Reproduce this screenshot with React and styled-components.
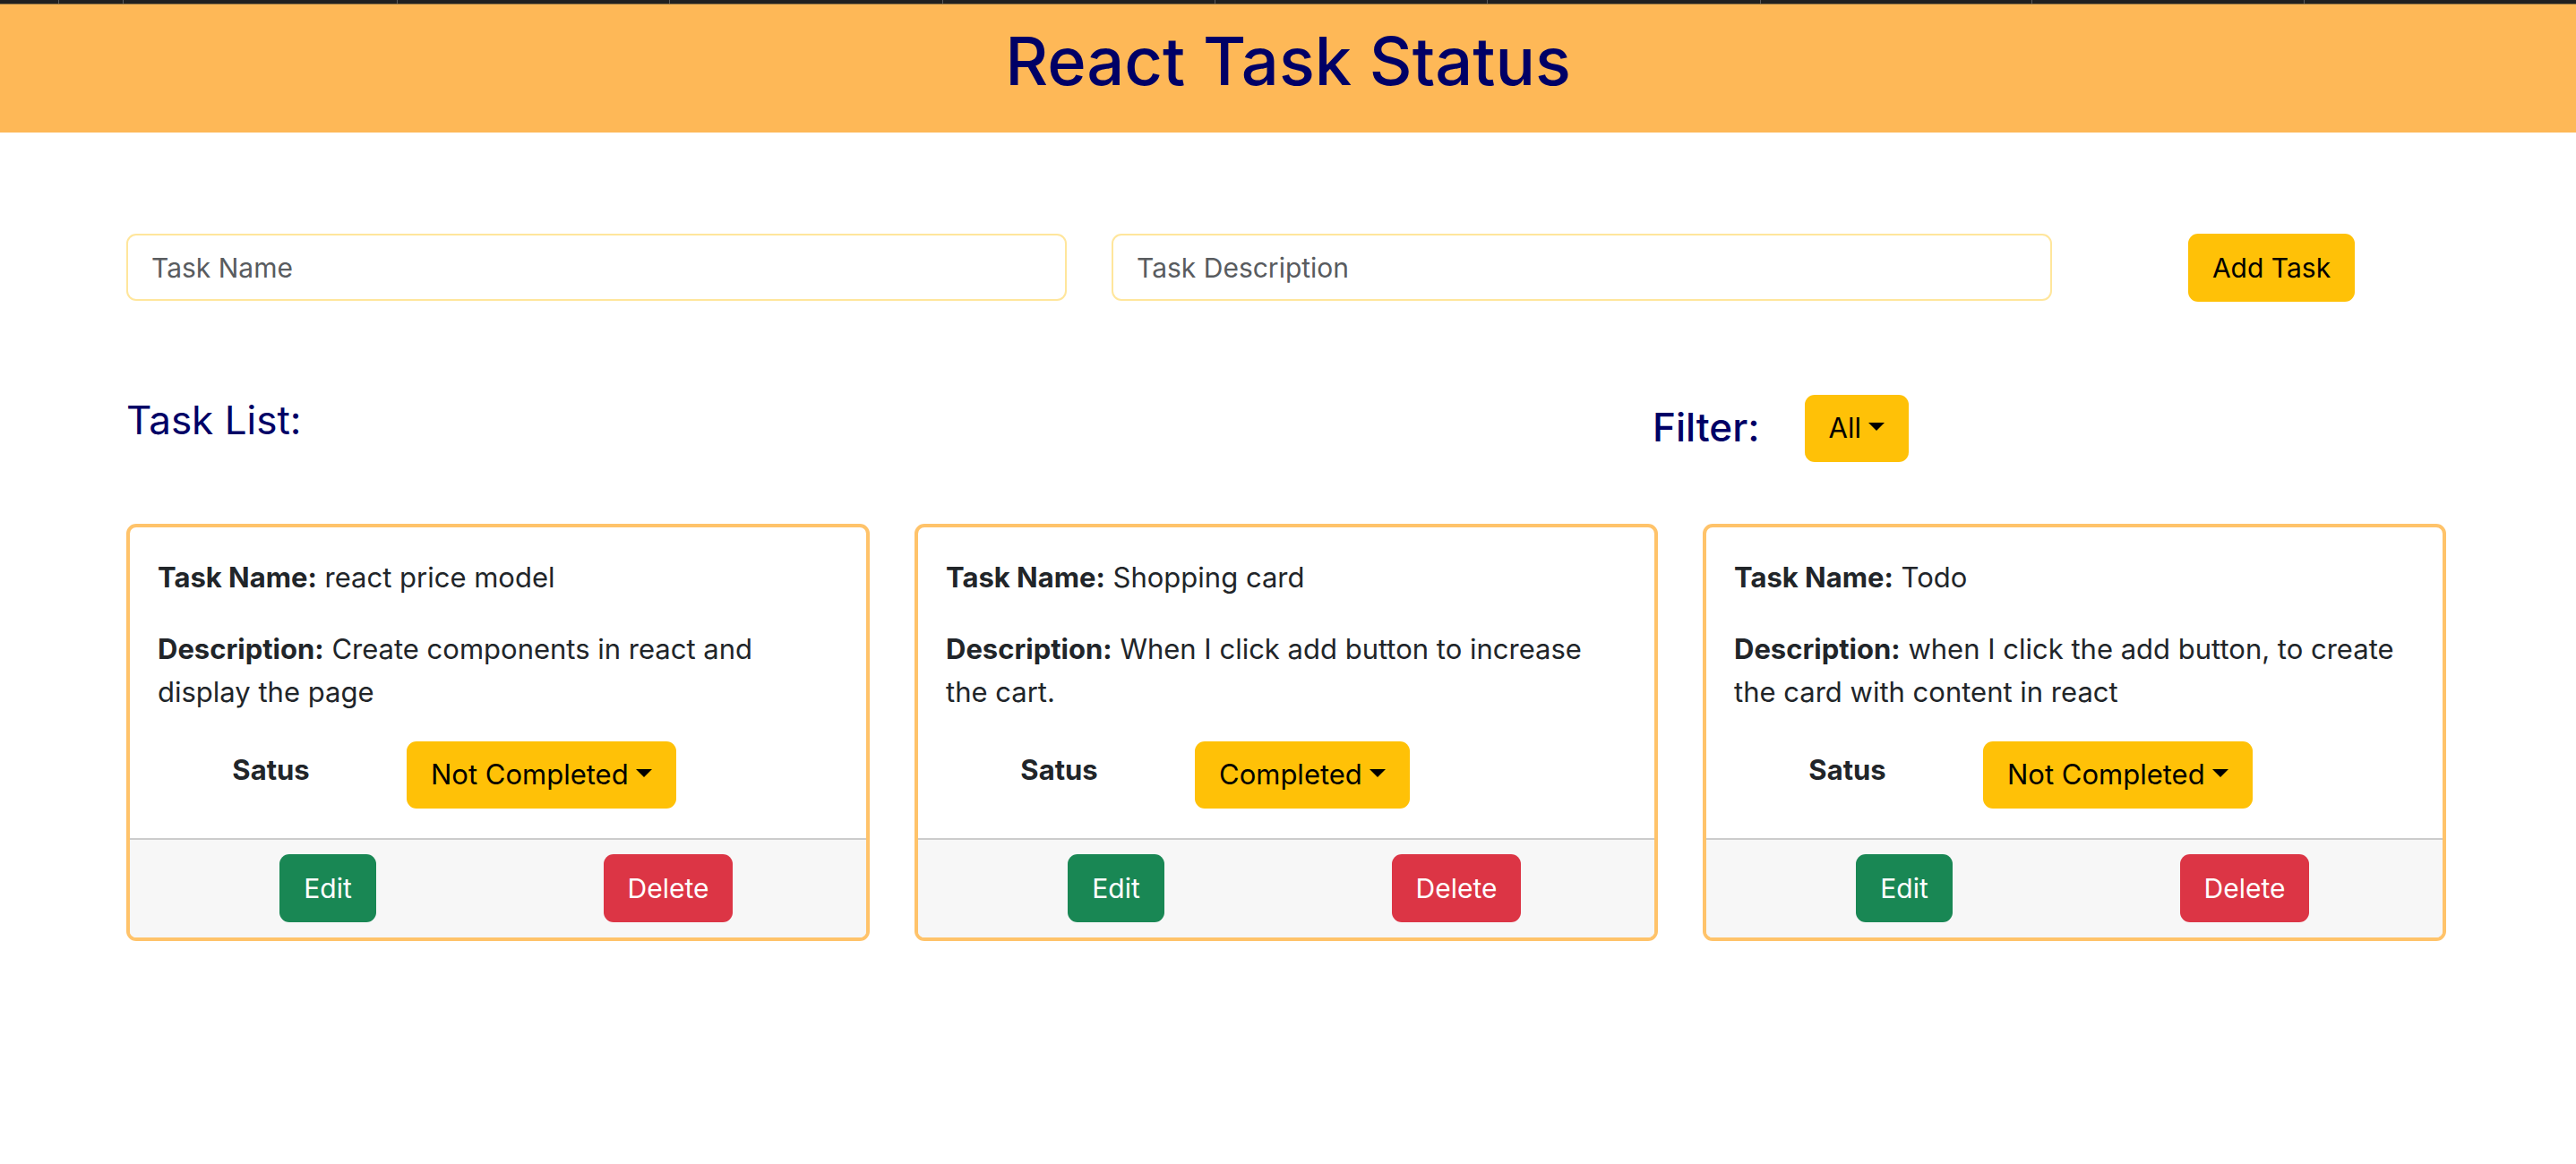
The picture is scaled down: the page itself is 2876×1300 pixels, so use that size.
import styled, { createGlobalStyle } from "styled-components";

const GlobalStyle = createGlobalStyle`
  * { box-sizing: border-box; }
  body {
    margin: 0;
    background: #ffffff;
    color: #212529;
    font-family: Inter, "Noto Sans", sans-serif;
  }
`;

const TabStrip = styled.div`
  display: flex;
  height: 5px;
  background: #202020;
  border-bottom: 1px solid #8d6f40;
`;

const Tab = styled(({ width, ...props }) => <div {...props} />)`
  width: ${({ width }) => width}px;
  flex-shrink: 0;
  border-right: 1px solid #5a5a5a;
`;

const Header = styled.header`
  height: 143px;
  background: #feb857;
  display: flex;
  justify-content: center;
  padding-top: 19px;
`;

const Title = styled.h1`
  margin: 0;
  font-size: 74px;
  line-height: 1.2;
  font-weight: 500;
  color: #000066;
`;

const Container = styled.main`
  width: 2731px;
  padding-left: 141px;
`;

const InputRow = styled.div`
  display: grid;
  grid-template-columns: 1050px 1050px 1fr;
  column-gap: 50px;
  margin-top: 113px;
`;

const TextInput = styled.input`
  height: 75px;
  width: 100%;
  border: 2px solid #ffe69c;
  border-radius: 11px;
  padding: 0 26px;
  font-family: inherit;
  font-size: 30px;
  color: #212529;
  outline: none;
  &::placeholder {
    color: #595c5f;
  }
`;

const ButtonCell = styled.div`
  display: flex;
  justify-content: center;
`;

const Button = styled(({ tone, ...props }) => <button {...props} />)`
  font-family: inherit;
  font-size: 30px;
  line-height: 48px;
  padding: 13px 26px;
  border-radius: 11px;
  border: 1px solid transparent;
  cursor: pointer;
  white-space: nowrap;
  background: ${({ tone }) =>
    tone === "success" ? "#198754" : tone === "danger" ? "#dc3545" : "#ffc107"};
  color: ${({ tone }) => (tone === "success" || tone === "danger" ? "#ffffff" : "#000000")};
`;

const Toggle = styled(Button)`
  padding: 12px 26px 13px 26px;
  font-size: 31px;
  &::after {
    content: "";
    display: inline-block;
    margin-left: 0.255em;
    vertical-align: 0.255em;
    border-top: 0.3em solid;
    border-right: 0.3em solid transparent;
    border-left: 0.3em solid transparent;
  }
`;

const ListBar = styled.div`
  display: grid;
  grid-template-columns: 1704px auto;
  align-items: start;
  margin-top: 104px;
`;

const ListTitle = styled.h3`
  margin: 0;
  font-size: 44px;
  line-height: 56px;
  font-weight: 400;
  color: #000066;
`;

const FilterGroup = styled.div`
  display: flex;
  align-items: flex-start;
  gap: 50px;
`;

const FilterLabel = styled.span`
  margin-top: 8px;
  font-size: 44px;
  line-height: 56px;
  font-weight: 500;
  color: #000066;
`;

const CardGrid = styled.div`
  display: grid;
  grid-template-columns: repeat(3, 1fr);
  column-gap: 50px;
  margin-top: 69px;
`;

const Card = styled.div`
  border: 4px solid #ffc36a;
  border-radius: 11px;
  overflow: hidden;
`;

const CardBody = styled.div`
  padding: 32px 31px 33px 31px;
`;

const Line = styled.p`
  margin: 0 0 32px;
  font-size: 31px;
  line-height: 48px;
  b {
    font-weight: 700;
  }
`;

const StatusRow = styled.div`
  display: grid;
  grid-template-columns: 253px 1fr;
  align-items: start;
  margin-top: -1px;
`;

const StatusLabel = styled.span`
  margin-top: 8px;
  text-align: center;
  font-size: 31px;
  line-height: 48px;
  font-weight: 700;
`;

const StatusCell = styled.div`
  padding-left: 25px;
`;

const CardFooter = styled.div`
  display: grid;
  grid-template-columns: 1fr 1fr;
  justify-items: center;
  padding: 16px 31px 17px;
  background: #f7f7f7;
  border-top: 2px solid #cccccc;
`;

const tabs = [66, 72, 306, 304, 305, 304, 304, 305, 303, 304];

const tasks = [
  {
    name: "react price model",
    description: "Create components in react and display the page",
    status: "Not Completed",
  },
  {
    name: "Shopping card",
    description: "When I click add button to increase the cart.",
    status: "Completed",
  },
  {
    name: "Todo",
    description: "when I click the add button, to create the card with content in react",
    status: "Not Completed",
  },
];

export default function App() {
  return (
    <>
      <GlobalStyle />
      <TabStrip>
        {tabs.map((w, i) => (
          <Tab key={i} width={w} />
        ))}
      </TabStrip>
      <Header>
        <Title>React Task Status</Title>
      </Header>
      <Container>
        <InputRow>
          <TextInput placeholder="Task Name" />
          <TextInput placeholder="Task Description" />
          <ButtonCell>
            <Button tone="warning">Add Task</Button>
          </ButtonCell>
        </InputRow>

        <ListBar>
          <ListTitle>Task List:</ListTitle>
          <FilterGroup>
            <FilterLabel>Filter:</FilterLabel>
            <Toggle tone="warning">All</Toggle>
          </FilterGroup>
        </ListBar>

        <CardGrid>
          {tasks.map((task) => (
            <Card key={task.name}>
              <CardBody>
                <Line>
                  <b>Task Name:</b> {task.name}
                </Line>
                <Line>
                  <b>Description:</b> {task.description}
                </Line>
                <StatusRow>
                  <StatusLabel>Satus</StatusLabel>
                  <StatusCell>
                    <Toggle tone="warning">{task.status}</Toggle>
                  </StatusCell>
                </StatusRow>
              </CardBody>
              <CardFooter>
                <Button tone="success">Edit</Button>
                <Button tone="danger">Delete</Button>
              </CardFooter>
            </Card>
          ))}
        </CardGrid>
      </Container>
    </>
  );
}
